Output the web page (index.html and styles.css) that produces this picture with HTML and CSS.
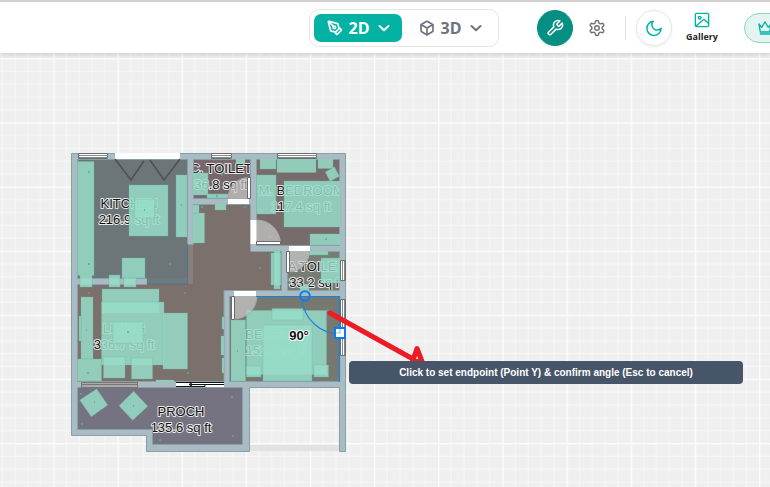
FILE: index.html
```html
<!DOCTYPE html>
<html lang="en">
<head>
<meta charset="utf-8">
<title>Floor plan editor</title>
<link rel="stylesheet" href="styles.css">
</head>
<body>
<header class="toolbar">
  <div class="modes">
    <button class="mode mode-active" type="button">
      <svg class="icon-mode" viewBox="0 0 24 24"><path d="M15.707 21.293a1 1 0 0 1-1.414 0l-1.586-1.586a1 1 0 0 1 0-1.414l5.586-5.586a1 1 0 0 1 1.414 0l1.586 1.586a1 1 0 0 1 0 1.414z"/><path d="m18 13-1.375-6.874a1 1 0 0 0-.746-.776L3.235 2.028a1 1 0 0 0-1.207 1.207L5.35 15.879a1 1 0 0 0 .776.746L13 18"/><path d="m2.3 2.3 7.286 7.286"/><circle cx="11" cy="11" r="2"/></svg>
      <span>2D</span>
      <svg class="icon-chevron" viewBox="0 0 12 12"><path d="M1.500 4l4.500 4.300L10.500 4"/></svg>
    </button>
    <button class="mode" type="button">
      <svg class="icon-mode" viewBox="0 0 24 24"><path d="M21 8a2 2 0 0 0-1-1.730l-7-4a2 2 0 0 0-2 0l-7 4A2 2 0 0 0 3 8v8a2 2 0 0 0 1 1.730l7 4a2 2 0 0 0 2 0l7-4A2 2 0 0 0 21 16Z"/><path d="m3.3 7 8.7 5 8.7-5M12 22V12"/></svg>
      <span>3D</span>
      <svg class="icon-chevron" viewBox="0 0 12 12"><path d="M1.500 4l4.500 4.300L10.500 4"/></svg>
    </button>
  </div>
  <div class="tools">
    <button class="round round-active" type="button" aria-label="Tools">
      <svg class="icon-tool" viewBox="0 0 24 24"><path d="M14.7 6.3a1 1 0 0 0 0 1.4l1.6 1.6a1 1 0 0 0 1.4 0l3.77-3.77a6 6 0 0 1-7.94 7.94l-6.91 6.91a2.12 2.12 0 0 1-3-3l6.91-6.91a6 6 0 0 1 7.94-7.94l-3.76 3.76z"/></svg>
    </button>
    <button class="plain" type="button" aria-label="Settings">
      <svg class="icon-tool" viewBox="0 0 24 24"><path d="M12.22 2h-.44a2 2 0 0 0-2 2v.18a2 2 0 0 1-1 1.73l-.43.25a2 2 0 0 1-2 0l-.15-.08a2 2 0 0 0-2.73.73l-.22.38a2 2 0 0 0 .73 2.73l.15.1a2 2 0 0 1 1 1.72v.51a2 2 0 0 1-1 1.74l-.15.09a2 2 0 0 0-.73 2.73l.22.38a2 2 0 0 0 2.73.73l.15-.08a2 2 0 0 1 2 0l.43.25a2 2 0 0 1 1 1.73V20a2 2 0 0 0 2 2h.44a2 2 0 0 0 2-2v-.18a2 2 0 0 1 1-1.73l.43-.25a2 2 0 0 1 2 0l.15.08a2 2 0 0 0 2.73-.73l.22-.39a2 2 0 0 0-.73-2.73l-.15-.08a2 2 0 0 1-1-1.74v-.5a2 2 0 0 1 1-1.74l.15-.09a2 2 0 0 0 .73-2.73l-.22-.38a2 2 0 0 0-2.73-.73l-.15.08a2 2 0 0 1-2 0l-.43-.25a2 2 0 0 1-1-1.73V4a2 2 0 0 0-2-2z"/><circle cx="12" cy="12" r="3"/></svg>
    </button>
    <span class="divider"></span>
    <button class="round" type="button" aria-label="Dark mode">
      <svg class="icon-tool" viewBox="0 0 24 24"><path d="M11 3a7 7 0 0 0 10.500 9.500A9.500 9.500 0 1 1 11 3z"/></svg>
    </button>
    <button class="gallery" type="button">
      <svg class="icon-gallery" viewBox="0 0 24 24"><rect x="2" y="2" width="20" height="20" rx="2"/><circle cx="8.500" cy="8.500" r="2"/><path d="M3 21L15 11l6.500 6"/></svg>
      <span>Gallery</span>
    </button>
    <button class="premium" type="button" aria-label="Premium">
      <svg class="icon-crown" viewBox="0 0 24 24"><path d="M3 6l4 5 5-8 5 8 4-5-2 12H5zM5 21h14"/></svg>
    </button>
  </div>
</header>
<main class="canvas">
  <svg class="drawing" role="img" aria-label="Floor plan">
    <defs>
      <pattern id="grid" x="53.3" y="58.2" width="64.15" height="64.15" patternUnits="userSpaceOnUse">
        <path class="grid-minor" d="M13.1 0V65M25.9 0V65M38.7 0V65M51.5 0V65M0 13.1H65M0 25.9H65M0 38.7H65M0 51.5H65"/>
        <path class="grid-major" d="M.6 0V65M0 .6H65"/>
      </pattern>
    </defs>
    <g transform="translate(0 -53)">
      <rect width="100%" height="2000" fill="url(#grid)"/>

      <g class="rooms">
        <path fill="#7b706b" d="M187 204H284V293H227V384H77V281H187z"/>
        <rect fill="#6c7578" x="77" y="159" width="111" height="125"/>
        <rect fill="#86807d" x="187" y="244" width="6" height="40"/>
        <rect fill="#76686d" x="193" y="159" width="58" height="40"/>
        <rect fill="#776c6b" x="256" y="159" width="84" height="87"/>
        <rect fill="#777d73" x="287" y="251" width="53" height="40"/>
        <rect fill="#777970" x="229" y="296" width="111" height="87"/>
        <path fill="#757381" d="M77 387H243V445H152V430H77z"/>
        <rect fill="#dfe3e3" x="249" y="445" width="91" height="6"/>
      </g>

      <g class="labels">
        <text x="129" y="208">KITCHEN</text><text x="129" y="224">216.9 sq ft</text>
        <text x="221" y="173">C. TOILET</text><text x="221" y="189">36.8 sq ft</text>
        <text x="301" y="195">M. BEDROOM</text><text x="301" y="211">117.4 sq ft</text>
        <text x="316" y="271">A TOILET</text><text x="316" y="287">33.2 sq ft</text>
        <text x="124" y="333">LIVING</text><text x="124" y="349">336.7 sq ft</text>
        <text x="276" y="339">BEDRoom</text><text x="276" y="355">152.7 sq ft</text>
        <text x="181" y="416">PROCH</text><text x="181" y="432">135.6 sq ft</text>
      </g>

      <path class="wall" fill-rule="evenodd" d="M71.500 153.500H345.500V451.500H339.500V387.500H249.500V451.500H146.500V435.500H71.500z
        M77.500 159.500V278.500H187.500V159.500z M193.500 159.500V198.500H250.500V159.500z M256.500 159.500V245.500H339.500V159.500z
        M287.500 251.500V290.500H339.500V251.500z M229.500 296.500V381.500H339.500V296.500z
        M193.500 204.500V244.500H187.500V278.500H147V284.500H77.500V381.500H224V290.500H281.500V251.500H250.500V204.500z
        M77.500 387.500V429.500H152.500V444.500H242.500V387.500z"/>
      <rect fill="#6c7a82" x="147" y="278" width="40" height="6"/>
      <path fill="none" stroke="#587184" d="M187.500 244V284H147"/>

      <g class="furniture">
        <rect x="77.500" y="161.500" width="16.500" height="114"/><rect x="129" y="185" width="39" height="51"/>
        <rect x="134.500" y="199" width="20" height="19"/><rect x="176" y="175" width="11" height="62"/>
        <rect x="122" y="258" width="23" height="20"/><rect x="80" y="275" width="12" height="12"/>
        <rect x="109" y="275" width="11" height="12"/><rect x="124" y="278" width="12" height="9"/>
        <rect x="193" y="173" width="15" height="22"/><rect x="207" y="194" width="21" height="4"/>
        <rect x="215" y="204" width="11" height="6"/><rect x="193" y="213" width="11.500" height="30"/>
        <rect x="193" y="205" width="6" height="8"/><rect x="236" y="159" width="9" height="5"/>
        <rect x="260" y="159" width="16" height="10"/><rect x="277" y="159" width="39" height="13.500"/>
        <rect x="318" y="159" width="15" height="9.500"/><rect x="327" y="169" width="10.500" height="10.500" transform="rotate(-28 332 174)"/>
        <rect x="256.500" y="175" width="19.500" height="39"/><rect x="284" y="181" width="56" height="46"/>
        <rect x="310" y="234" width="30" height="11"/><rect x="271" y="253" width="10" height="32"/>
        <rect x="274" y="251" width="6" height="38"/><rect x="309" y="251" width="19" height="4"/>
        <rect x="321" y="258" width="19" height="25"/><rect x="300" y="286" width="9" height="5"/>
        <rect x="81" y="297" width="12" height="62"/><rect x="79" y="316" width="2" height="25"/>
        <rect x="102" y="289" width="57" height="24"/><rect x="101.500" y="302" width="62.500" height="63"/>
        <rect x="163" y="313" width="24.500" height="56"/><rect x="77.500" y="359" width="24" height="22"/>
        <rect x="103.500" y="357" width="21.500" height="21"/><rect x="131.500" y="358" width="21" height="21"/>
        <rect x="113" y="322" width="30" height="21"/><rect x="156" y="380" width="18" height="2"/>
        <rect x="222" y="317" width="2" height="12"/><rect x="221" y="336" width="3" height="19"/><rect x="222" y="358" width="2" height="15"/>
        <rect x="231" y="320" width="14.500" height="61"/><rect x="246.500" y="310.500" width="80" height="64"/>
        <rect x="272" y="308.500" width="31" height="11.500"/><rect x="263" y="325" width="49" height="56"/>
        <rect x="246.500" y="366" width="14.500" height="11"/><rect x="314" y="365" width="14.500" height="12"/>
        <path d="M96.700 389L107.700 405 91.300 416.700 79.700 400zM133.700 391.300L147.700 406.300 132.700 420.300 119 405.700z"/>
      </g>
      <path class="speck" d="M88 172h2M88 264h2M169 264h2M201 207h2M244 207h2M259 268h2M269 237h2M221 175h2M88 293h2M184 293h2M187 373h2M80 394h2M81 424h2M159 440h2M231 397h2M232 436h2M86 330h1M94 402h1M133 406h1M127 332h2M144 210h1M181 205h1M327 310h2M237 351h1M216 196h2M325 239h2M87 373h2M246 310h2"/>

      <g class="openings">
        <path class="swing" d="M256.500 244V220A24 24 0 0 1 280.500 244zM288.500 251H309.500A21 21 0 0 1 288.500 272zM249 198.500V177.500A21 21 0 0 0 228 198.500zM234 296H257A23 23 0 0 1 234 319z"/>
        <path class="opening" d="M115 153h65v6h-65zM228 199h21v5h-21zM250.500 220h6v24h-6zM289 246h21v5h-21zM234 291h22v5h-22z"/>
        <path class="leaf" d="M256.500 241.500h24v3h-24zM286.500 251.500h3v21h-3zM247.500 177.500h3v21h-3zM231.500 296.500h3v23h-3z"/>
        <path class="window" d="M78.500 153.500h29v5h-29zM211.500 153.500h20v5h-20zM277.500 153.500h39v5h-39zM340.500 260.500h5v20h-5zM340.500 299.500h5v56h-5z"/>
        <path class="pane" d="M79 155.500h29M79 157.500h29M212 155.500h20M212 157.500h20M278 155.500h39M278 157.500h39M342.500 261v19M344.500 261v19M342.500 300v55M344.500 300v55"/>
        <path class="window-dim" d="M81.500 382.500h56v5h-56zM81.500 384.500h56"/>
        <path class="opening" d="M176 382h48v5h-48z"/>
        <path class="sliding" d="M176 382.500H224M189 384.500H224M176 386.500H205V384.500M189 384.500l3-1.500M189 384.500l3 1.500"/>
        <path class="folding" d="M115 159L131 180 144 161M150 160L164 180 180 159"/>
      </g>

      <g class="measure">
        <path d="M256 296.500H339.500V382"/><path d="M302 300A38.500 38.500 0 0 0 340 334"/>
        <circle cx="305" cy="296" r="4.800"/><rect class="handle" x="335" y="328" width="10" height="10"/>
        <path class="handle-lines" d="M340 329V333H336"/>
        <text x="299" y="340">90°</text>
      </g>
      <g class="arrow"><path d="M330 313L413 359"/><path d="M417 348.500L412.500 361.500H422z"/></g>
    </g>
  </svg>
  <div class="hint" role="status">Click to set endpoint (Point Y) &amp; confirm angle (Esc to cancel)</div>
</main>
</body>
</html>
```

FILE: styles.css
```css
* { box-sizing: border-box; }
html, body { height: 100%; }
body {
  margin: 0;
  display: flex;
  flex-direction: column;
  overflow: hidden;
  font-family: "Open Sans", sans-serif;
  background: #efefef;
}
button {
  padding: 0;
  border: 0;
  background: none;
  font: inherit;
  color: inherit;
}
svg { display: block; fill: none; }
.toolbar {
  flex: none;
  display: flex;
  align-items: center;
  gap: 38px;
  height: 53px;
  padding: 1px 0 0 309px;
  border-top: 2px solid #cfd1d0;
  background: #fff;
  box-shadow: 0 1px 5px rgba(0, 0, 0, .18);
  position: relative;
  z-index: 1;
}
.modes {
  flex: none;
  display: flex;
  gap: 4px;
  width: 190px;
  height: 38px;
  padding: 4px;
  border: 1px solid #e2e4e6;
  border-radius: 10px;
}
.mode {
  display: flex;
  align-items: center;
  justify-content: center;
  gap: 6px;
  width: 88px;
  height: 28px;
  border-radius: 7px;
  color: #6b7280;
  font-size: 16px;
  font-weight: 700;
}
.mode-active { background: #02b3a5; color: #fff; }
.icon-mode, .icon-chevron, .icon-tool, .icon-gallery, .icon-crown {
  flex: none;
  stroke: currentColor;
  stroke-width: 2;
  stroke-linecap: round;
  stroke-linejoin: round;
}
.icon-mode { width: 16px; height: 16px; stroke-width: 2.5; }
.icon-chevron { width: 12px; height: 12px; margin-left: 2px; }
.icon-tool { width: 18px; height: 18px; }
.icon-gallery { width: 16px; height: 16px; }
.icon-crown { width: 16px; height: 16px; }
.tools { flex: none; display: flex; align-items: center; }
.round {
  display: grid;
  place-items: center;
  width: 36px;
  height: 36px;
  border: 1px solid #e3e5e6;
  border-radius: 50%;
  color: #02b3a5;
  box-shadow: 0 1px 3px rgba(0, 0, 0, .08);
}
.round-active { background: #039083; border-color: #039083; color: #fff; }
.plain { margin: 0 19px 0 15px; color: #737373; }
.divider { width: 1px; height: 24px; margin-right: 10px; background: #e0e2e4; }
.gallery {
  display: flex;
  flex-direction: column;
  align-items: center;
  gap: 3px;
  width: 60px;
  padding-bottom: 2px;
  color: #02b3a5;
  font-size: 9px;
  font-weight: 700;
  line-height: 12px;
}
.gallery span { color: #262626; }
.premium {
  display: flex;
  align-items: center;
  width: 60px;
  height: 30px;
  margin-left: 12px;
  padding-left: 12px;
  border: 1px solid #8fd3ca;
  border-radius: 15px;
  background: #e3f4f1;
  color: #02b3a5;
}
.canvas { flex: 1; min-height: 0; position: relative; }
.drawing { width: 100%; height: 100%; }
.grid-minor { stroke: #f7f7f7; stroke-width: 1; }
.grid-major { stroke: #fdfdfd; stroke-width: 1.3; }
.labels, .measure text {
  font-family: "Liberation Sans", Arial, sans-serif;
  font-size: 13px;
  text-anchor: middle;
  fill: #111;
  stroke: #e8e8e8;
  stroke-width: 2;
  stroke-linejoin: round;
  paint-order: stroke;
}
.wall { fill: #a9bcc3; stroke: #87a0a8; stroke-width: 1; }
.furniture { fill: #97dec9; fill-opacity: .84; stroke: #6fbba7; stroke-opacity: .35; stroke-width: 1; }
.speck { stroke: #4fb096; stroke-width: 1.5; }
.swing { fill: #cbcbc9; fill-opacity: .7; stroke: #a4aaa8; }
.opening { fill: #fff; }
.leaf { fill: #fff; stroke: #6b6b6b; }
.window { fill: #fff; stroke: #686d70; }
.pane { stroke: #888; }
.window-dim { fill: #aaa; stroke: #777; }
.sliding { stroke: #111; }
.folding { stroke: #514f50; stroke-width: 1.5; }
.measure { stroke: #1683df; stroke-width: 1.2; }
.measure circle { stroke: #0a7cf0; stroke-width: 2; }
.measure text { stroke: #fff; font-weight: 700; stroke-width: 2; }
.handle { fill: #fff; stroke: #0a7cf0; stroke-width: 2; }
.handle-lines { stroke: #8fc4f5; }
.arrow { stroke: #ed1c24; stroke-width: 5; stroke-linecap: round; stroke-linejoin: round; }
.hint {
  position: absolute;
  left: 349px;
  top: 308px;
  width: 394px;
  padding: 4px 8px;
  border-radius: 4px;
  background: #475569;
  color: #fff;
  font: 700 10px/15px "Liberation Sans", Arial, sans-serif;
  text-align: center;
}
```
